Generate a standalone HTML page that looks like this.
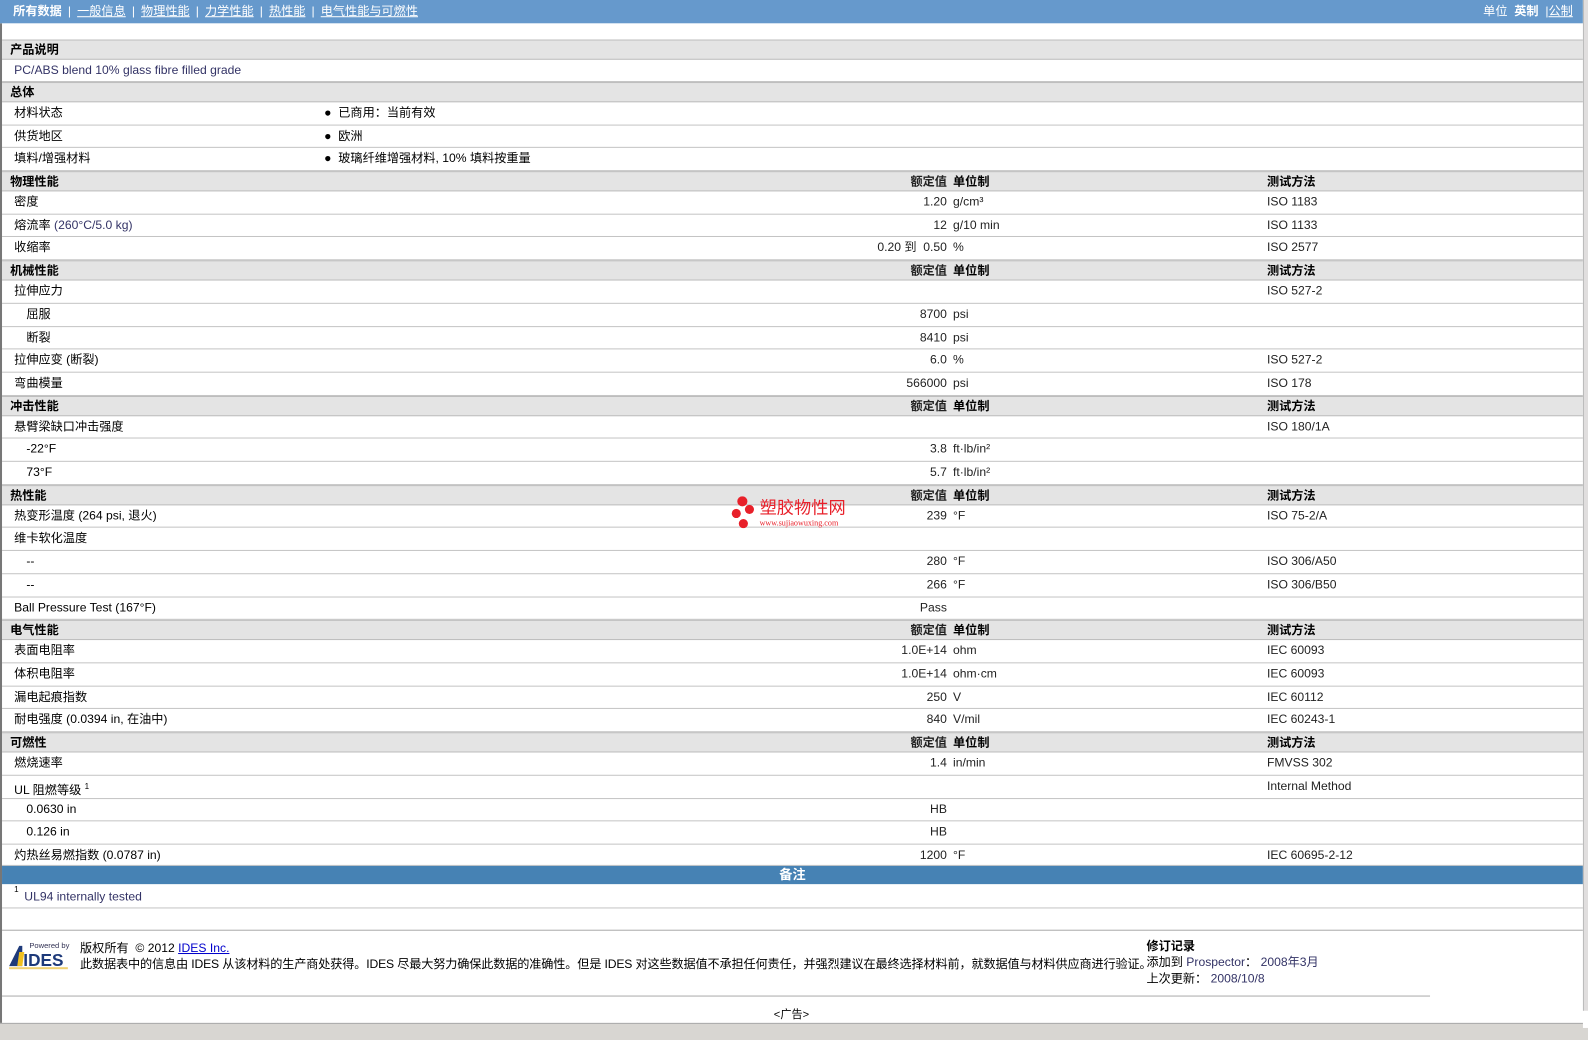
<!DOCTYPE html>
<html><head><meta charset="utf-8">
<style>
*{margin:0;padding:0;box-sizing:border-box}
html,body{width:1588px;height:1027px;overflow:hidden;background:#fff}
#w{position:absolute;left:0;top:0;width:1568px;height:1015px;transform:scale(1.01276);transform-origin:0 0;font-family:"Liberation Sans","Noto Sans CJK SC","WenQuanYi Zen Hei",sans-serif;font-size:12px;color:#000}
.nav{position:absolute;left:0;top:0;width:1563px;height:23px;background:#6699cc;color:#fff;font-size:12px;line-height:22px}
.nav .l{position:absolute;left:13px}
.nav .r{position:absolute;right:10px}
.nav a{color:#fff;text-decoration:underline}
.nav b{font-weight:bold}
.sep{margin:0 6px}
.row{position:absolute;left:2px;width:1561px;border-bottom:1px solid #c4c4c4;line-height:21px}
.h{background:#e4e4e4;font-weight:bold;border-top:1px solid #bdbdbd;border-bottom:1px solid #bdbdbd;line-height:18px}
.row span{position:absolute;white-space:nowrap}
.lb{left:12px}
.lb2{left:24px}
.hl{left:8px}
.v{right:628px;text-align:right;color:#222}
.u{left:939px;color:#222}
.t{left:1249px;color:#222}
.b{left:318px}
.bt{left:332px}
.g{color:#333366}
.left{position:absolute;left:0;top:23px;width:2px;height:992px;background:#777}
.sb{position:absolute;left:1563px;top:0;width:5px;height:1015px;background:#fff}
.sb i{position:absolute;left:0;top:0;width:5px;height:998px;background:#e0dede;border-left:1px solid #bbb}
</style></head><body><div id="w">
<div class="left"></div>
<div class="nav"><span class="l"><b>所有数据</b><span class="sep">|</span><a>一般信息</a><span class="sep">|</span><a>物理性能</a><span class="sep">|</span><a>力学性能</a><span class="sep">|</span><a>热性能</a><span class="sep">|</span><a>电气性能与可燃性</a></span><span class="r">单位&nbsp; <b>英制</b>&nbsp; |<a>公制</a></span></div>

<div class="row h" style="top:39px;height:20px"><span class="hl">产品说明</span></div>
<div class="row" style="top:59px;height:22px"><span class="lb g">PC/ABS blend 10% glass fibre filled grade</span></div>
<div class="row h" style="top:81px;height:20px"><span class="hl">总体</span></div>
<div class="row" style="top:101px;height:23px"><span class="lb">材料状态</span><span class="b">●</span><span class="bt">已商用：当前有效</span></div>
<div class="row" style="top:124px;height:22px"><span class="lb">供货地区</span><span class="b">●</span><span class="bt">欧洲</span></div>
<div class="row" style="top:146px;height:23px"><span class="lb">填料/增强材料</span><span class="b">●</span><span class="bt">玻璃纤维增强材料, 10% 填料按重量</span></div>

<div class="row h" style="top:169px;height:20px"><span class="hl">物理性能</span><span class="v">额定值</span><span class="u" style="color:#000">单位制</span><span class="t" style="color:#000">测试方法</span></div>
<div class="row" style="top:189px;height:23px"><span class="lb">密度</span><span class="v">1.20</span><span class="u">g/cm³</span><span class="t">ISO 1183</span></div>
<div class="row" style="top:212px;height:22px"><span class="lb">熔流率 <span class="g" style="position:static">(260°C/5.0 kg)</span></span><span class="v">12</span><span class="u">g/10 min</span><span class="t">ISO 1133</span></div>
<div class="row" style="top:234px;height:23px"><span class="lb">收缩率</span><span class="v">0.20 到 &nbsp;0.50</span><span class="u">%</span><span class="t">ISO 2577</span></div>

<div class="row h" style="top:257px;height:20px"><span class="hl">机械性能</span><span class="v">额定值</span><span class="u" style="color:#000">单位制</span><span class="t" style="color:#000">测试方法</span></div>
<div class="row" style="top:277px;height:23px"><span class="lb">拉伸应力</span><span class="t">ISO 527-2</span></div>
<div class="row" style="top:300px;height:23px"><span class="lb2">屈服</span><span class="v">8700</span><span class="u">psi</span></div>
<div class="row" style="top:323px;height:22px"><span class="lb2">断裂</span><span class="v">8410</span><span class="u">psi</span></div>
<div class="row" style="top:345px;height:23px"><span class="lb">拉伸应变 (断裂)</span><span class="v">6.0</span><span class="u">%</span><span class="t">ISO 527-2</span></div>
<div class="row" style="top:368px;height:23px"><span class="lb">弯曲模量</span><span class="v">566000</span><span class="u">psi</span><span class="t">ISO 178</span></div>

<div class="row h" style="top:391px;height:20px"><span class="hl">冲击性能</span><span class="v">额定值</span><span class="u" style="color:#000">单位制</span><span class="t" style="color:#000">测试方法</span></div>
<div class="row" style="top:411px;height:22px"><span class="lb">悬臂梁缺口冲击强度</span><span class="t">ISO 180/1A</span></div>
<div class="row" style="top:433px;height:23px"><span class="lb2">-22°F</span><span class="v">3.8</span><span class="u">ft·lb/in²</span></div>
<div class="row" style="top:456px;height:23px"><span class="lb2">73°F</span><span class="v">5.7</span><span class="u">ft·lb/in²</span></div>

<div class="row h" style="top:479px;height:20px"><span class="hl">热性能</span><span class="v">额定值</span><span class="u" style="color:#000">单位制</span><span class="t" style="color:#000">测试方法</span></div>
<div class="row" style="top:499px;height:22px"><span class="lb">热变形温度 (264 psi, 退火)</span><span class="v">239</span><span class="u">°F</span><span class="t">ISO 75-2/A</span></div>
<div class="row" style="top:521px;height:23px"><span class="lb">维卡软化温度</span></div>
<div class="row" style="top:544px;height:23px"><span class="lb2">--</span><span class="v">280</span><span class="u">°F</span><span class="t">ISO 306/A50</span></div>
<div class="row" style="top:567px;height:23px"><span class="lb2">--</span><span class="v">266</span><span class="u">°F</span><span class="t">ISO 306/B50</span></div>
<div class="row" style="top:590px;height:22px"><span class="lb">Ball Pressure Test (167°F)</span><span class="v">Pass</span></div>

<div class="row h" style="top:612px;height:20px"><span class="hl">电气性能</span><span class="v">额定值</span><span class="u" style="color:#000">单位制</span><span class="t" style="color:#000">测试方法</span></div>
<div class="row" style="top:632px;height:23px"><span class="lb">表面电阻率</span><span class="v">1.0E+14</span><span class="u">ohm</span><span class="t">IEC 60093</span></div>
<div class="row" style="top:655px;height:23px"><span class="lb">体积电阻率</span><span class="v">1.0E+14</span><span class="u">ohm·cm</span><span class="t">IEC 60093</span></div>
<div class="row" style="top:678px;height:22px"><span class="lb">漏电起痕指数</span><span class="v">250</span><span class="u">V</span><span class="t">IEC 60112</span></div>
<div class="row" style="top:700px;height:23px"><span class="lb">耐电强度 (0.0394 in, 在油中)</span><span class="v">840</span><span class="u">V/mil</span><span class="t">IEC 60243-1</span></div>

<div class="row h" style="top:723px;height:20px"><span class="hl">可燃性</span><span class="v">额定值</span><span class="u" style="color:#000">单位制</span><span class="t" style="color:#000">测试方法</span></div>
<div class="row" style="top:743px;height:23px"><span class="lb">燃烧速率</span><span class="v">1.4</span><span class="u">in/min</span><span class="t">FMVSS 302</span></div>
<div class="row" style="top:766px;height:23px"><span class="lb">UL 阻燃等级 <sup style="font-size:8px">1</sup></span><span class="t">Internal Method</span></div>
<div class="row" style="top:789px;height:22px"><span class="lb2">0.0630 in</span><span class="v">HB</span></div>
<div class="row" style="top:811px;height:23px"><span class="lb2">0.126 in</span><span class="v">HB</span></div>
<div class="row" style="top:834px;height:21px"><span class="lb">灼热丝易燃指数 (0.0787 in)</span><span class="v">1200</span><span class="u">°F</span><span class="t">IEC 60695-2-12</span></div>

<div style="position:absolute;left:2px;top:855px;width:1561px;height:18px;background:#4682b4;color:#fff;font-weight:bold;font-size:13px;text-align:center;line-height:17px">备注</div>
<div class="row" style="top:873px;height:24px"><span style="left:12px;top:-5px;font-size:8px">1</span><span style="left:22px;top:2px" class="g">UL94 internally tested</span></div>
<div class="row" style="top:897px;height:22px;border-bottom:1px solid #aaa"></div>

<svg style="position:absolute;left:7px;top:928px" width="62" height="30" viewBox="0 0 62 30">
<text x="22" y="8" font-size="7.5" fill="#335" font-family="Liberation Sans">Powered by</text>
<polygon points="2,26 12,6 15,6 15,26" fill="#1e3a7a"/>
<polygon points="12,12 17,12 15,26 10,26" fill="#f0c020"/>
<text x="16" y="26" font-size="17" font-weight="bold" fill="#1e3a7a" font-family="Liberation Sans">IDES</text>
<rect x="2" y="27" width="58" height="2" fill="#f0d070"/>
</svg>
<div style="position:absolute;left:79px;top:928px;line-height:16px;white-space:nowrap">版权所有 &nbsp;© 2012 <a style="color:#0000cc;text-decoration:underline">IDES Inc.</a><br><span style="letter-spacing:-0.15px">此数据表中的信息由 IDES 从该材料的生产商处获得。IDES 尽最大努力确保此数据的准确性。但是 IDES 对这些数据值不承担任何责任，并强烈建议在最终选择材料前，就数据值与材料供应商进行验证。</span></div>
<div style="position:absolute;left:1132px;top:926px;line-height:16px;white-space:nowrap"><b>修订记录</b><br>添加到 <span class="g">Prospector</span>： <span class="g">2008年3月</span><br>上次更新： <span class="g">2008/10/8</span></div>
<div style="position:absolute;left:2px;top:983px;width:1410px;height:1px;background:#aaa"></div>
<div style="position:absolute;left:0;top:993px;width:1563px;text-align:center;font-size:11px">&lt;广告&gt;</div>
<div style="position:absolute;left:0;top:1010px;width:1568px;height:17px;background:#d8d6d2;border-top:1px solid #aaa"></div>

<div style="position:absolute;left:720px;top:490px">
<svg width="30" height="34" style="position:absolute;left:0;top:0"><circle cx="13" cy="5" r="5" fill="#e8202a"/><circle cx="20" cy="13" r="4.5" fill="#e8202a"/><circle cx="7" cy="17" r="4.5" fill="#e8202a"/><circle cx="14" cy="27" r="4.5" fill="#e8202a"/></svg>
<div style="position:absolute;left:30px;top:3px;color:#e8202a;font-size:17px;white-space:nowrap;line-height:18px">塑胶物性网</div>
<div style="position:absolute;left:30px;top:22px;color:#e8202a;font-size:8px;white-space:nowrap;font-family:'Liberation Serif',serif">www.sujiaowuxing.com</div>
</div>
<div class="sb"><i></i></div>
</div></body></html>
